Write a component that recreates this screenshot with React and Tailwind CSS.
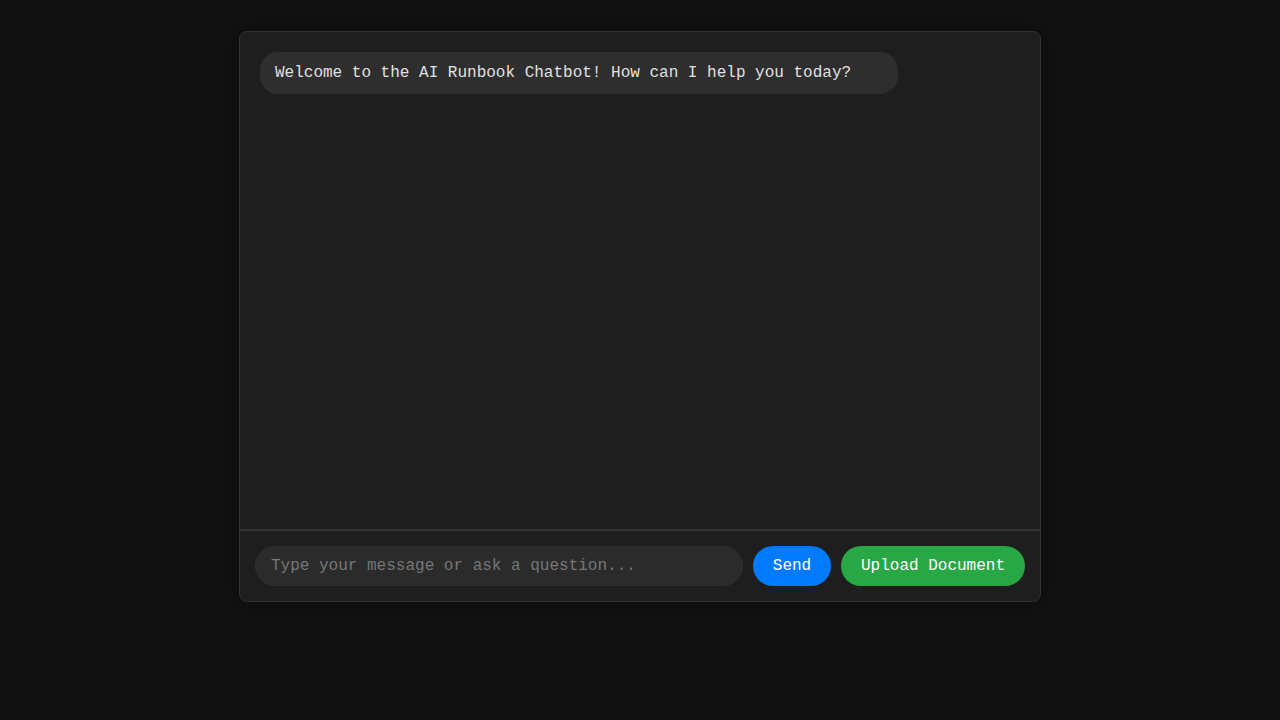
export default function App() {
  const mono = { fontFamily: '"Liberation Mono", "DejaVu Sans Mono", monospace' };
  return (
    <div className="min-h-screen w-full bg-[#121212] flex justify-center pt-[31px]" style={mono}>
      <div className="w-[802px] h-[571px] flex flex-col rounded-lg border border-[#333333] bg-[#1e1e1e] shadow-[0_0_20px_rgba(0,0,0,0.5)] overflow-hidden">
        <div className="flex-1 p-5">
          <div className="w-[638px] h-[42px] flex items-center px-[15px] rounded-[18px] bg-[#2e2e2e] text-[#e0e0e0] text-base">
            Welcome to the AI Runbook Chatbot! How can I help you today?
          </div>
        </div>
        <div className="border-t-2 border-[#333333] px-[15px] py-[15px] flex items-center gap-[10px]">
          <input
            className="flex-1 h-[40px] rounded-full bg-[#2b2b2b] border border-[#2f2f2f] px-[15px] text-base text-[#e0e0e0] placeholder-[#777777] outline-none"
            style={mono}
            placeholder="Type your message or ask a question..."
          />
          <button className="h-[40px] w-[78px] rounded-full bg-[#007bff] text-white text-base" style={mono}>Send</button>
          <button className="h-[40px] w-[184px] rounded-full bg-[#28a745] text-white text-base" style={mono}>Upload Document</button>
        </div>
      </div>
    </div>
  );
}
